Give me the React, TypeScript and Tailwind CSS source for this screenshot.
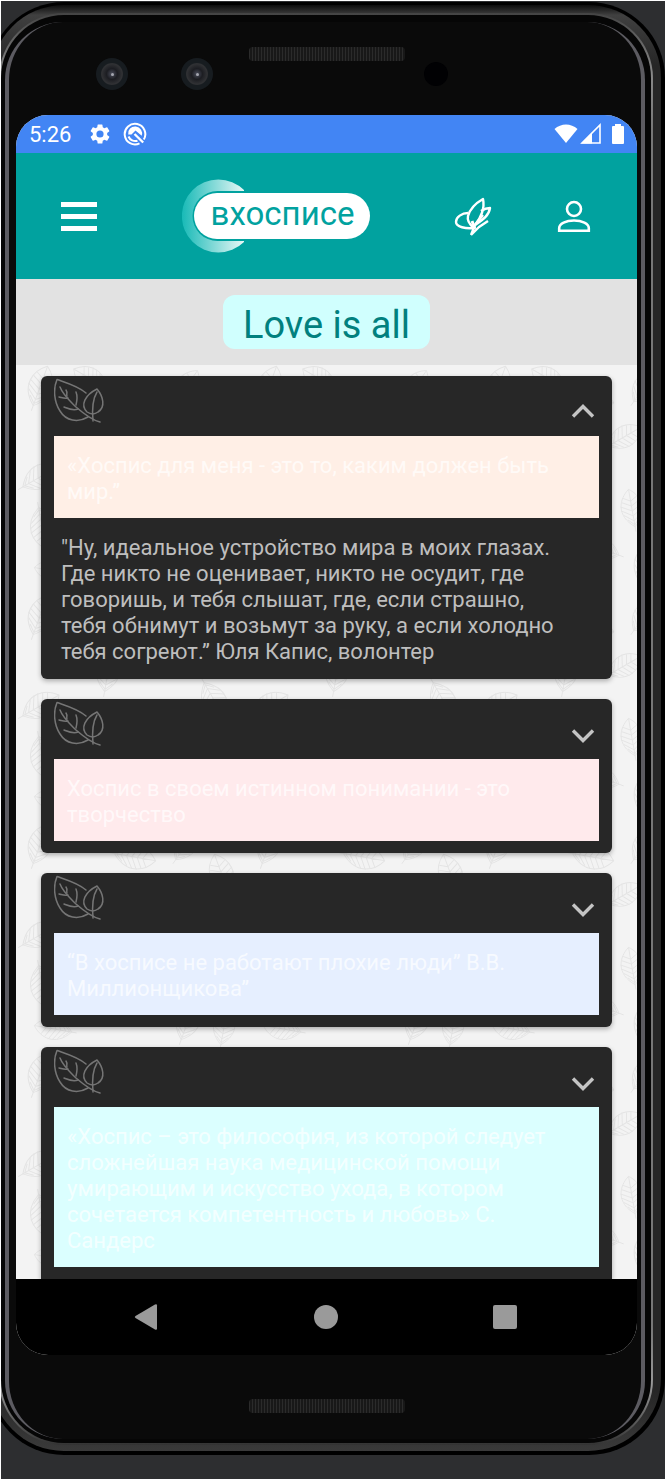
import { useState } from "react";

type Quote = { title: string; body?: string; tone: string };

const quotes: Quote[] = [
  {
    title: "«Хоспис для меня - это то, каким должен быть мир.”",
    body: "\"Ну, идеальное устройство мира в моих глазах. Где никто не оценивает, никто не осудит, где говоришь, и тебя слышат, где, если страшно, тебя обнимут и возьмут за руку, а если холодно тебя согреют.” Юля Капис, волонтер",
    tone: "bg-[#ffefe6]",
  },
  { title: "Хоспис в своем истинном понимании - это творчество", tone: "bg-[#ffeaec]" },
  { title: "“В хосписе не работают плохие люди” В.В. Миллионщикова”", tone: "bg-[#e6efff]" },
  {
    title: "«Хоспис – это философия, из которой следует сложнейшая наука медицинской помощи умирающим и искусство ухода, в котором сочетается компетентность и любовь» С. Сандерс",
    tone: "bg-[#dbffff]",
  },
];

const leaves = [
  [24, 22, 20, 1.1], [75, 14, -60, 1], [118, 34, 100, 1.1], [170, 22, 35, 1], [206, 52, -20, 1.1],
  [44, 66, -110, 1], [92, 78, 10, 1.1], [150, 72, 60, 1], [198, 106, 150, 1.1], [24, 112, 60, 1.1],
  [62, 128, -30, 1], [112, 130, 120, 1.1], [158, 144, -10, 1], [205, 158, 75, 1.1], [26, 162, 170, 1.1],
  [78, 178, 45, 1.1], [128, 184, -70, 1], [172, 198, 20, 1.1], [38, 206, -80, 1], [208, 204, 10, 1],
];

function LeafBackdrop() {
  return (
    <svg className="absolute inset-0 h-full w-full" aria-hidden="true">
      <defs>
        <g id="leaf" fill="none" stroke="#e4e4e4" strokeWidth="0.9">
          <path d="M0 -20C11 -12 17 4 0 18C-17 4 -11 -12 0 -20Z" />
          <path d="M0 -20V23M0 -8L7 -12M0 -8L-7 -12M0 -3L9 -8M0 -3L-9 -8M0 2L11 -4M0 2L-11 -4M0 7L11 0M0 7L-11 0M0 12L9 5M0 12L-9 5M0 16L6 10M0 16L-6 10" />
        </g>
        <pattern id="foliage" width="229" height="229" patternUnits="userSpaceOnUse">
          {leaves.map(([x, y, r, s], i) => (
            <use key={i} href="#leaf" transform={`translate(${x} ${y}) rotate(${r}) scale(${s})`} />
          ))}
        </pattern>
      </defs>
      <rect width="100%" height="100%" fill="url(#foliage)" />
    </svg>
  );
}

function LeavesIcon() {
  return (
    <svg className="h-[46px] w-[52px]" viewBox="0 0 52 46" fill="none" stroke="#757575" strokeWidth="1.500" strokeLinecap="round" strokeLinejoin="round" aria-hidden="true">
      <path d="M32 15C24 8 13 5 3 1.500C-1 11 0 24 6 33C12 43 24 45 34 39" />
      <path d="M6 9C9 17 16 23 22 29C30 36 38 42 46 44" />
      <path d="M13 18C12 16 14 15 12 12M14 20C11 21 9 20 5 19M22 27C23 23 24 19 22 14M24 31C19 33 15 31 10 29" />
      <path d="M43 11C49 18 52 29 44 34C40 37 36 36 33 34C26 27 31 17 43 11Z" />
      <path d="M43 14C38 22 38 32 39 43" />
    </svg>
  );
}

function QuoteCard({ quote, startOpen, last }: { quote: Quote; startOpen: boolean; last: boolean }) {
  const [open, setOpen] = useState(startOpen);
  return (
    <article className={`bg-[#272727] px-[13px] pb-3 shadow-[0_2px_5px_rgba(0,0,0,0.3)] ${last ? "rounded-t-md" : "rounded-md"}`}>
      <div className="flex h-[60px] items-start justify-between">
        <div className="pt-[2px]"><LeavesIcon /></div>
        <button type="button" aria-expanded={open} aria-label="Показать цитату" onClick={() => setOpen(!open)} className="mt-5 h-8 w-8">
          <svg className={open ? "h-8 w-8" : "h-8 w-8 rotate-180"} viewBox="0 0 32 32" fill="none" stroke="#c4c4c4" strokeWidth="3.4" aria-hidden="true">
            <path d="M6 20.500L16 10.500L26 20.500" />
          </svg>
        </button>
      </div>
      <h2 className={`px-[13px] pt-[17px] pb-[13px] text-[22px] leading-[26px] text-white/70 ${quote.tone}`}>{quote.title}</h2>
      {open && quote.body && <p className="pt-[17px] pr-8 pb-[2px] pl-[7px] text-[22px] leading-[26px] text-[#bebebe]">{quote.body}</p>}
    </article>
  );
}

function Speaker() {
  return (
    <div className="h-[14px] w-[156px] rounded-[4px] bg-[repeating-linear-gradient(90deg,#2b2b2b_0px,#2b2b2b_1px,#181818_1px,#181818_3px)]" />
  );
}

function Camera() {
  return (
    <div className="flex h-8 w-8 items-center justify-center rounded-full bg-[#171c20]">
      <div className="flex h-[22px] w-[22px] items-center justify-center rounded-full bg-[radial-gradient(circle,#4b4e5c_0%,#1c1d22_35%,#303134_65%,#1b1d20_100%)]">
        <div className="h-[3px] w-[3px] rounded-full bg-[#a5a7b0]" />
      </div>
    </div>
  );
}

function StatusBar() {
  return (
    <div className="flex h-[38px] items-center bg-[#4285f4] pr-[7px] pl-[13px] text-white">
      <span className="w-[59px] pt-[2px] text-[22px] leading-7">5:26</span>
      <svg className="h-6 w-6" viewBox="0 0 24 24" fill="currentColor" aria-hidden="true">
        <path d="M19.14 12.94c.04-.3.06-.61.06-.94s-.02-.64-.07-.94l2.03-1.58a.49.49 0 0 0 .12-.61l-1.92-3.32a.49.49 0 0 0-.59-.22l-2.39.96a7 7 0 0 0-1.62-.94l-.36-2.54a.48.48 0 0 0-.48-.41h-3.84a.48.48 0 0 0-.47.41l-.36 2.54c-.59.24-1.13.57-1.62.94l-2.39-.96a.48.48 0 0 0-.59.22L2.74 8.87a.48.48 0 0 0 .12.61l2.03 1.58c-.05.3-.09.63-.09.94s.02.64.07.94l-2.03 1.58a.49.49 0 0 0-.12.61l1.92 3.32c.12.22.37.29.59.22l2.39-.96c.5.38 1.03.7 1.62.94l.36 2.54c.05.24.24.41.48.41h3.84c.24 0 .44-.17.47-.41l.36-2.54a7 7 0 0 0 1.62-.94l2.39.96c.22.08.47 0 .59-.22l1.92-3.32a.48.48 0 0 0-.12-.61zM12 15.6a3.6 3.6 0 1 1 0-7.2 3.6 3.6 0 0 1 0 7.2z" />
      </svg>
      <svg className="ml-[11px] h-6 w-6" viewBox="0 0 24 24" fill="none" stroke="currentColor" aria-hidden="true">
        <path d="M16.500 21.400A10.300 10.300 0 1 1 20.800 17.500" strokeWidth="2" />
        <path d="M5.200 12.500A7 7 0 1 1 18.700 13.800L12.500 8.500L8.500 12.500Z" fill="currentColor" stroke="none" />
        <path d="M5.500 14.500A7.300 7.300 0 0 0 14.500 18.700" strokeWidth="2" />
        <path d="M11.500 12L20.200 20.500" strokeWidth="2.400" />
      </svg>
      <div className="ml-auto flex items-center">
        <svg className="h-6 w-6" viewBox="0 0 24 24" fill="currentColor" aria-hidden="true"><path d="M.5 7C7 1 17 1 23.500 7L12 21Z" /></svg>
        <svg className="ml-[2px] h-6 w-6" viewBox="0 0 24 24" aria-hidden="true">
          <path d="M2 21L20 3V21Z" fill="none" stroke="currentColor" strokeWidth="1.600" />
          <path d="M1 21.500L12 10.500V21.500Z" fill="currentColor" />
        </svg>
        <svg className="ml-[2px] h-6 w-6" viewBox="0 0 24 24" fill="currentColor" aria-hidden="true"><path d="M9 2h6v2h2q1 0 1 1v16q0 1-1 1H7q-1 0-1-1V5q0-1 1-1h2Z" /></svg>
      </div>
    </div>
  );
}

function AppBar() {
  return (
    <header className="grid h-[126px] grid-cols-[126px_1fr_76px_126px] items-center justify-items-center bg-[#01a29f] text-white">
      <button type="button" aria-label="Меню" className="flex w-9 flex-col gap-[7px]">
        <span className="h-[5px] bg-white" />
        <span className="h-[5px] bg-white" />
        <span className="h-[5px] bg-white" />
      </button>
      <a href="#" className="relative mr-[26px] flex h-[74px] w-[188px] items-center justify-end">
        <svg className="absolute inset-0 h-full w-full" viewBox="0 0 188 74" aria-hidden="true">
          <defs>
            <linearGradient id="moon" x1="0" x2="1" y1="0" y2="0">
              <stop offset="0" stopColor="#18bab7" />
              <stop offset="1" stopColor="#e8f7f6" />
            </linearGradient>
          </defs>
          <path d="M62 11A36.500 36.500 0 1 0 62 63Z" fill="url(#moon)" />
          <rect x="10.500" y="12" width="200" height="50" rx="25" fill="#01a29f" />
          <rect x="12" y="14" width="176" height="46" rx="23" fill="#fff" />
        </svg>
        <span className="relative pr-[15px] pb-[5px] text-[33px] leading-9 text-[#01a29f]">вхосписе</span>
      </a>
      <button type="button" aria-label="Цитаты" className="h-10 w-10">
        <svg className="h-10 w-10" viewBox="0 0 40 40" fill="none" stroke="currentColor" strokeWidth="2.400" strokeLinejoin="round" aria-hidden="true">
          <path d="M21 32C13 33 3 31 3 26C3 21 9 17 15 17" />
          <path d="M21 32C16 28 14 24 15 20C17 13 23 7 30 3C32 12 28 22 22 29" />
          <path d="M28 15C31 13 34 12 37 12C36 19 31 23 22 29" />
          <path d="M22 29L30 19M18 39L26 31L35 25M18 39L22 29" />
          <path d="M19 25L22 33" strokeWidth="3" />
        </svg>
      </button>
      <button type="button" aria-label="Профиль" className="h-9 w-9">
        <svg className="h-9 w-9" viewBox="0 0 36 36" fill="none" stroke="currentColor" strokeWidth="2.600" aria-hidden="true">
          <circle cx="18" cy="11" r="7" />
          <path d="M3.200 32.800V30C3.200 25.500 10 22.500 18 22.500S32.800 25.500 32.800 30V32.800Z" />
        </svg>
      </button>
    </header>
  );
}

function NavBar() {
  return (
    <nav className="grid h-[76px] grid-cols-[1fr_100px_1fr] items-center bg-black pr-[120px] pl-[118px] text-[#9a9a9a]">
      <button type="button" aria-label="Назад" className="h-7 w-6 justify-self-start">
        <svg className="h-7 w-6" viewBox="0 0 24 28" fill="currentColor" aria-hidden="true"><path d="M1.500 13L21 1.500Q23 .5 23 2.500V25.500Q23 27.500 21 26.500L1.500 15Q0 14 1.500 13Z" /></svg>
      </button>
      <button type="button" aria-label="Домой" className="h-6 w-6 justify-self-center rounded-full bg-[#9a9a9a]" />
      <button type="button" aria-label="Недавние" className="h-6 w-6 justify-self-end rounded-[2px] bg-[#9a9a9a]" />
    </nav>
  );
}

export default function App() {
  return (
    <div className="overflow-hidden border-t border-l border-white bg-[#2d2e30] pt-px pb-6 font-[Roboto,'Noto_Sans',sans-serif]">
      <div className="-ml-[13px] rounded-[76px] bg-black pt-[3px] pr-1 pb-1 pl-[3px]">
        <div className="rounded-[73px] bg-[linear-gradient(180deg,#0c0c0c_0px,#404040_10px,#262626_60px,#262626_calc(100%-60px),#3a3a3a_100%)] pt-2 pr-2 pb-[6px] pl-2">
          <div className="rounded-[65px] bg-[linear-gradient(180deg,#444,#888_60px,#777_120px,#777_calc(100%-120px),#999_calc(100%-60px),#333)] p-[2px]">
            <div className="rounded-[63px] bg-[#060606] pt-[7px] pr-[6px] pb-1 pl-1">
              <div className="rounded-[58px] border-x-[4px] border-[#5c5b61] bg-[#0a0a0a] pr-1 pl-[7px]">
                <div className="grid h-[93px] grid-cols-[1fr_190px_1fr]">
                  <div className="flex items-start gap-[53px] pt-9 pl-[80px]">
                    <Camera />
                    <Camera />
                  </div>
                  <div className="justify-self-center pt-[25px]"><Speaker /></div>
                  <div className="pt-10 pl-[2px]"><div className="h-6 w-6 rounded-full bg-[#010103]" /></div>
                </div>
                <div className="overflow-hidden rounded-[32px] bg-[#f3f3f3]">
                  <StatusBar />
                  <AppBar />
                  <div className="flex h-[86px] items-center justify-center bg-[#e2e2e2]">
                    <h1 className="rounded-xl bg-[#d0fffe] px-5 pt-2 pb-[2px] text-[38px] leading-[44px] text-[#01807e]">Love is all</h1>
                  </div>
                  <main className="relative px-[25px] pt-[11px]">
                    <LeafBackdrop />
                    <div className="relative flex flex-col gap-5">
                      {quotes.map((quote, i) => (
                        <QuoteCard key={quote.title} quote={quote} startOpen={i === 0} last={i === quotes.length - 1} />
                      ))}
                    </div>
                  </main>
                  <NavBar />
                </div>
                <div className="flex h-[84px] justify-center pt-[44px]"><Speaker /></div>
              </div>
            </div>
          </div>
        </div>
      </div>
    </div>
  );
}
